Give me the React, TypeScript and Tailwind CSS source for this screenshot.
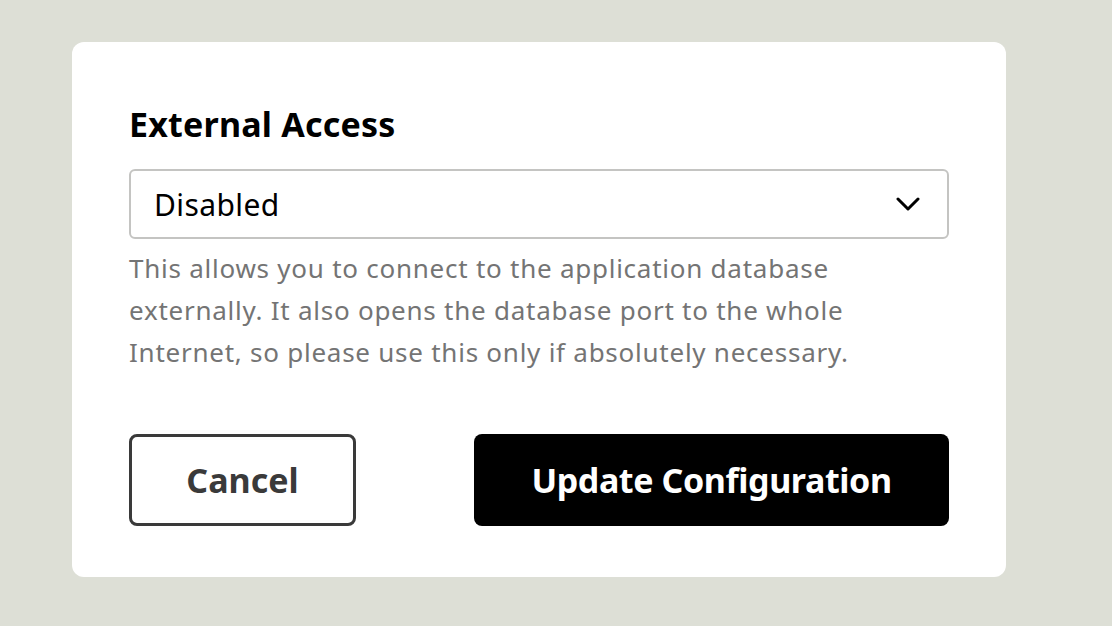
export default function App() {
  return (
    <div className="min-h-screen bg-[#dddfd6] pt-[42px] pl-[72px] font-['Noto_Sans',sans-serif]">
      <div className="w-[934px] h-[535px] rounded-xl bg-white px-[57px] pt-[60px]">
        <h2 className="text-[34px] leading-[44px] font-bold text-black tracking-[0.2px]">External Access</h2>

        {/* select */}
        <div className="mt-[23px] h-[70px] flex items-center justify-between rounded-md border-2 border-[#c4c4c2] pl-[23px] pr-[27px]">
          <span className="text-[30px] text-black tracking-[0.4px]">Disabled</span>
          <svg width="24" height="14" viewBox="0 0 24 14" fill="none" className="text-black">
            <polyline points="2,2 12,12 22,2" stroke="currentColor" strokeWidth="3" strokeLinecap="round" strokeLinejoin="round" />
          </svg>
        </div>

        <p className="mt-[8px] text-[26px] leading-[42px] text-[#747474] tracking-[0.75px] whitespace-nowrap">
          This allows you to connect to the application database
          <br />
          externally. It also opens the database port to the whole
          <br />
          Internet, so please use this only if absolutely necessary.
        </p>

        <div className="mt-[61px] flex justify-between">
          <button className="w-[227px] h-[92px] rounded-lg border-[3px] border-[#3a3a3a] text-[34px] font-bold text-[#3a3a3a]">
            Cancel
          </button>
          <button className="w-[475px] h-[92px] rounded-lg bg-black text-[34px] font-bold text-white tracking-[-0.4px]">
            Update Configuration
          </button>
        </div>
      </div>
    </div>
  );
}
